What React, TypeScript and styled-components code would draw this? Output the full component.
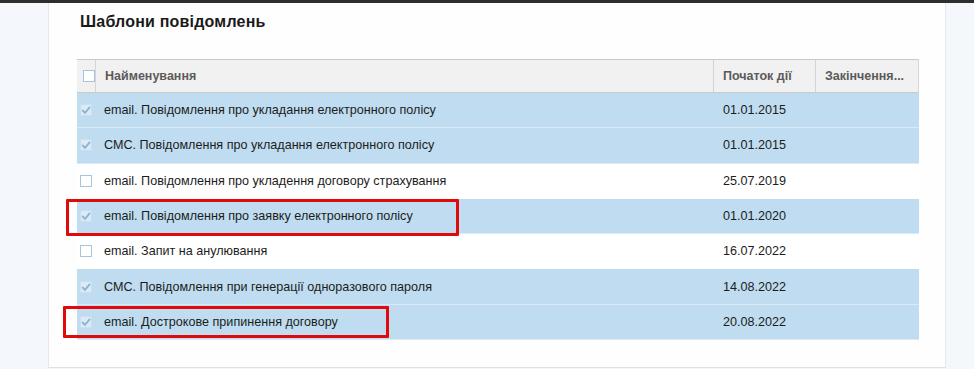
import React from 'react'
import styled, { createGlobalStyle } from 'styled-components'

const GlobalStyle = createGlobalStyle`
    html, body {
        margin: 0;
        padding: 0;
        background: #f4f7fc;
        font-family: "Liberation Sans", Arial, sans-serif;
    }
`

const Page = styled.div`
    width: 974px;
    height: 369px;
    display: flex;
    flex-direction: column;
    overflow: hidden;
    background: #f4f7fc;
`

const TopBar = styled.div`
    height: 3px;
    flex-shrink: 0;
    background: #2e2e2e;
`

const Body = styled.div`
    flex: 1;
    display: flex;
    padding-left: 48px;
`

const Panel = styled.div`
    position: relative;
    width: 898px;
    height: 365px;
    background: #fefefe;
    border-left: 1px solid #e6e8ec;
    border-right: 1px solid #e6e8ec;
    border-bottom: 1px solid #dfe1e5;
    box-sizing: border-box;
    padding: 9px 0 0 28px;
`

const Title = styled.h2`
    margin: 0 0 0 3px;
    font-size: 16px;
    line-height: 20px;
    font-weight: bold;
    letter-spacing: 0.2px;
    color: #1a1a1a;
`

const Table = styled.div`
    margin-top: 27px;
    width: 842px;
    display: flex;
    flex-direction: column;
`

const Columns = 'grid-template-columns: 18px 618px 102px 104px;'

const HeaderRow = styled.div`
    display: grid;
    ${Columns}
    height: 34px;
    box-sizing: border-box;
    background: #f1f1f1;
    border-top: 1px solid #c9c9c9;
    border-bottom: 1px solid #c9c9c9;
    border-right: 1px solid #d6d6d6;
`

const HeaderCell = styled.div<{ $sep?: boolean }>`
    display: flex;
    align-items: center;
    padding-left: ${p => (p.$sep ? '9px' : '3px')};
    border-left: ${p => (p.$sep ? '1px solid #d4d4d4' : 'none')};
    font-size: 12.5px;
    font-weight: bold;
    color: #5b5b5b;
    white-space: nowrap;
    overflow: hidden;
`

const Row = styled.div<{ $selected: boolean }>`
    display: grid;
    ${Columns}
    height: 35.3px;
    box-sizing: border-box;
    background: ${p => (p.$selected ? '#bfdcf0' : '#ffffff')};
    border-bottom: 1px solid ${p => (p.$selected ? '#d9eaf6' : '#ffffff')};
`

const Cell = styled.div<{ $pad?: number }>`
    display: flex;
    align-items: center;
    padding-left: ${p => p.$pad ?? 0}px;
    font-size: 12.6px;
    color: #1c1c1c;
    white-space: nowrap;
`

const Box = styled.span<{ $checked: boolean }>`
    width: 12px;
    height: 12px;
    box-sizing: border-box;
    margin-left: 3px;
    border: 1px solid ${p => (p.$checked ? '#cadeee' : '#a9c3d9')};
    background: ${p => (p.$checked ? '#dbeaf6' : '#ffffff')};
    display: flex;
    align-items: center;
    justify-content: center;
`

const Highlight = styled.div`
    position: absolute;
    border: 3px solid #e10a0a;
    border-radius: 1px;
    box-sizing: border-box;
    pointer-events: none;
`

function Checkbox({ checked }: { checked: boolean }) {
    return (
        <Box $checked={checked}>
            {checked && (
                <svg width="10" height="10" viewBox="0 0 10 10">
                    <path d="M1.2 5 L4 7.8 L9 1.8" fill="none" stroke="#8db3d3" strokeWidth="1.8" />
                </svg>
            )}
        </Box>
    )
}

const templates = [
    { name: 'email. Повідомлення про укладання електронного полісу', start: '01.01.2015', checked: true },
    { name: 'СМС. Повідомлення про укладання електронного полісу', start: '01.01.2015', checked: true },
    { name: 'email. Повідомлення про укладення договору страхування', start: '25.07.2019', checked: false },
    { name: 'email. Повідомлення про заявку електронного полісу', start: '01.01.2020', checked: true },
    { name: 'email. Запит на анулювання', start: '16.07.2022', checked: false },
    { name: 'СМС. Повідомлення при генерації одноразового пароля', start: '14.08.2022', checked: true },
    { name: 'email. Дострокове припинення договору', start: '20.08.2022', checked: true },
]

export default function App() {
    return (
        <>
            <GlobalStyle />
            <Page>
                <TopBar />
                <Body>
                    <Panel>
                        <Title>Шаблони повідомлень</Title>
                        <Table>
                            <HeaderRow>
                                <HeaderCell>
                                    <Checkbox checked={false} />
                                </HeaderCell>
                                <HeaderCell $sep>Найменування</HeaderCell>
                                <HeaderCell $sep>Початок дії</HeaderCell>
                                <HeaderCell $sep>Закінчення...</HeaderCell>
                            </HeaderRow>
                            {templates.map(t => (
                                <Row key={t.name} $selected={t.checked}>
                                    <Cell>
                                        <Checkbox checked={t.checked} />
                                    </Cell>
                                    <Cell $pad={9}>{t.name}</Cell>
                                    <Cell $pad={10}>{t.start}</Cell>
                                    <Cell />
                                </Row>
                            ))}
                        </Table>
                        {/* annotation frames drawn over the table */}
                        <Highlight style={{ left: 17, top: 196, width: 393, height: 37 }} />
                        <Highlight style={{ left: 14, top: 303, width: 326, height: 32 }} />
                    </Panel>
                </Body>
            </Page>
        </>
    )
}
